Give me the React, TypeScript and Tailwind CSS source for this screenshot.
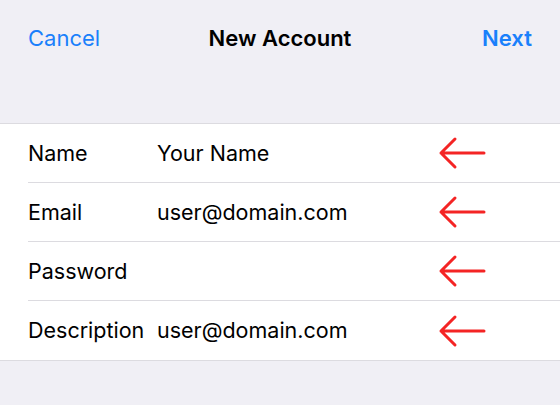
const rows = [
  { label: "Name", value: "Your Name" },
  { label: "Email", value: "user@domain.com" },
  { label: "Password", value: "" },
  { label: "Description", value: "user@domain.com" },
];

function ArrowLeft() {
  return (
    <svg width="50" height="34" viewBox="0 0 50 34" fill="none" className="shrink-0">
      <path
        d="M47 17H4M18 3L4 17l14 14"
        stroke="#f42424"
        strokeWidth="3"
        strokeLinecap="round"
        strokeLinejoin="round"
      />
    </svg>
  );
}

export default function App() {
  return (
    <div
      className="h-[405px] w-[560px] overflow-hidden bg-[#f0eff5] text-black"
      style={{ fontFamily: "Inter, 'Liberation Sans', sans-serif" }}
    >
      <div className="grid h-[76px] grid-cols-[1fr_auto_1fr] items-center px-7 text-[22px]">
        <span className="text-[#1a80fb]">Cancel</span>
        <span className="font-semibold">New Account</span>
        <span className="text-right font-semibold text-[#1a80fb]">Next</span>
      </div>
      <div className="mt-[47px] border-y border-[#dcdbe0] bg-white">
        {rows.map((row, i) => (
          <div key={row.label} className="pl-7">
            <div
              className={`flex h-[59px] items-center text-[21.5px] ${
                i < rows.length - 1 ? "border-b border-[#dcdbe0]" : ""
              }`}
            >
              <span className="w-[129px] shrink-0">{row.label}</span>
              <span className="w-[280px] shrink-0">{row.value}</span>
              <ArrowLeft />
            </div>
          </div>
        ))}
      </div>
    </div>
  );
}
